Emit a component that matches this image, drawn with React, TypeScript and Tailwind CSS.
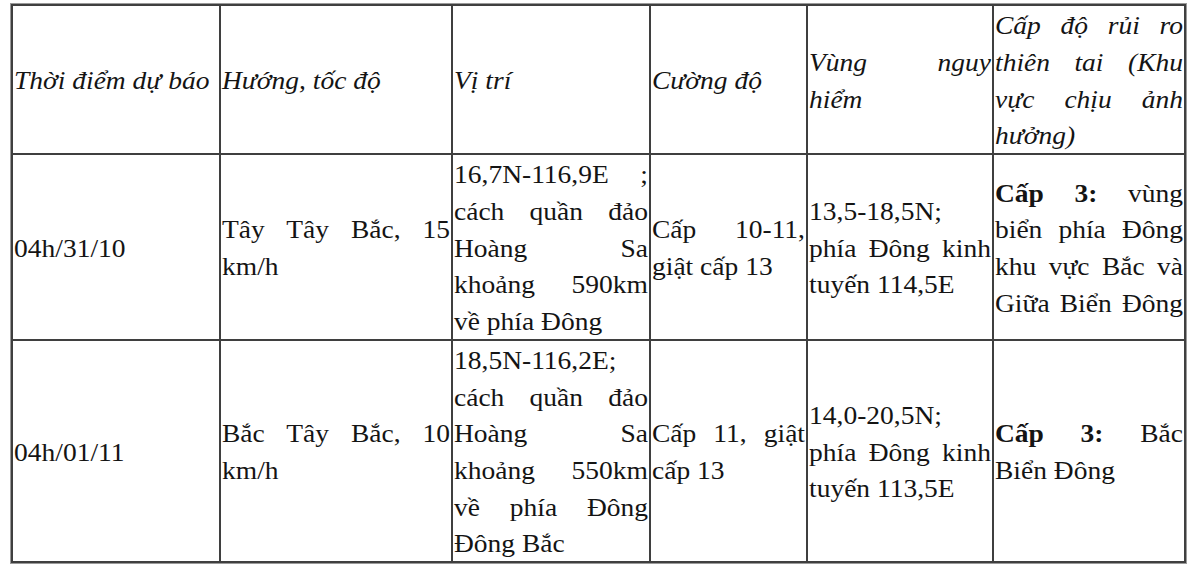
import React from "react";

type Line = { t: React.ReactNode; j?: boolean };
type Cell = { lines: Line[]; italic?: boolean };

const L = (t: React.ReactNode, j = false): Line => ({ t, j });

const B = ({ children }: { children: React.ReactNode }) => (
  <span className="font-bold">{children}</span>
);

const rows: Cell[][] = [
  [
    { italic: true, lines: [L("Thời điểm dự báo")] },
    { italic: true, lines: [L("Hướng, tốc độ")] },
    { italic: true, lines: [L("Vị trí")] },
    { italic: true, lines: [L("Cường độ")] },
    { italic: true, lines: [L("Vùng nguy", true), L("hiểm")] },
    {
      italic: true,
      lines: [
        L("Cấp độ rủi ro", true),
        L("thiên tai (Khu", true),
        L("vực chịu ảnh", true),
        L("hưởng)"),
      ],
    },
  ],
  [
    { lines: [L("04h/31/10")] },
    { lines: [L("Tây Tây Bắc, 15", true), L("km/h")] },
    {
      lines: [
        L("16,7N-116,9E ;", true),
        L("cách quần đảo", true),
        L("Hoàng Sa", true),
        L("khoảng 590km", true),
        L("về phía Đông"),
      ],
    },
    { lines: [L("Cấp 10-11,", true), L("giật cấp 13")] },
    { lines: [L("13,5-18,5N;"), L("phía Đông kinh", true), L("tuyến 114,5E")] },
    {
      lines: [
        L(
          <>
            <B>Cấp 3:</B> vùng
          </>,
          true
        ),
        L("biển phía Đông", true),
        L("khu vực Bắc và", true),
        L("Giữa Biển Đông", true),
      ],
    },
  ],
  [
    { lines: [L("04h/01/11")] },
    { lines: [L("Bắc Tây Bắc, 10", true), L("km/h")] },
    {
      lines: [
        L("18,5N-116,2E;"),
        L("cách quần đảo", true),
        L("Hoàng Sa", true),
        L("khoảng 550km", true),
        L("về phía Đông", true),
        L("Đông Bắc"),
      ],
    },
    { lines: [L("Cấp 11, giật", true), L("cấp 13")] },
    { lines: [L("14,0-20,5N;"), L("phía Đông kinh", true), L("tuyến 113,5E")] },
    {
      lines: [
        L(
          <>
            <B>Cấp 3:</B> Bắc
          </>,
          true
        ),
        L("Biển Đông"),
      ],
    },
  ],
];

export default function App() {
  return (
    <div className="w-[1200px] h-[568px] overflow-hidden bg-white [font-family:'Liberation_Serif','Times_New_Roman',serif] text-[#141414]">
      <div className="ml-[11px] mt-[4px] w-fit bg-[#3f3f3f] p-[2px] outline outline-1 outline-[#9a9a9a]">
        <div className="grid grid-cols-[206px_230px_196px_155px_184px_190px] grid-rows-[147px_184px_220px] gap-[2px]">
          {rows.map((row, ri) =>
            row.map((cell, ci) => (
              <div
                key={`${ri}-${ci}`}
                className={`flex flex-col justify-center bg-white px-[1px] text-[27.5px] leading-[36.7px] ${
                  cell.italic ? "italic" : ""
                }`}
              >
                {cell.lines.map((ln, li) => (
                  <div
                    key={li}
                    className={`whitespace-nowrap translate-y-[2px] scale-y-[0.91] ${
                      ln.j ? "text-justify [text-align-last:justify]" : "text-left"
                    }`}
                  >
                    {ln.t}
                  </div>
                ))}
              </div>
            ))
          )}
        </div>
      </div>
    </div>
  );
}
